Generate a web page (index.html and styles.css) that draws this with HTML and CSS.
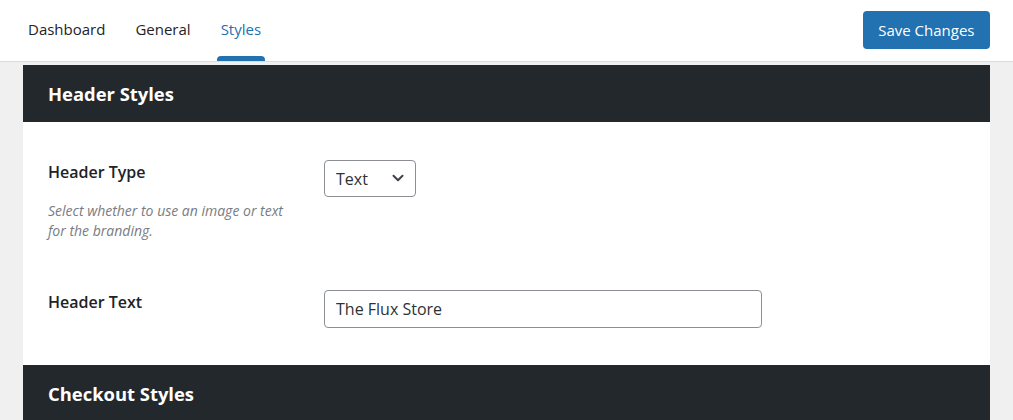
FILE: index.html
```html
<!DOCTYPE html>
<html lang="en">
<head>
    <meta charset="UTF-8">
    <meta name="viewport" content="width=device-width, initial-scale=1.0">
    <title>Styles - Settings</title>
    <link rel="stylesheet" href="styles.css">
</head>
<body>
    <div class="barra-superior">
        <nav class="pestanas">
            <a class="pestana" href="#">Dashboard</a>
            <a class="pestana" href="#">General</a>
            <a class="pestana activa" href="#">Styles</a>
        </nav>
        <button class="btn-guardar">Save Changes</button>
    </div>

    <div class="contenido">
        <div class="panel">
            <h2 class="panel-titulo">Header Styles</h2>
            <div class="panel-cuerpo">
                <div class="fila-opcion">
                    <div class="opcion-etiqueta">
                        <label for="header-type">Header Type</label>
                        <p class="opcion-ayuda">Select whether to use an image or text for the branding.</p>
                    </div>
                    <div class="opcion-campo">
                        <div class="selector">
                            <select id="header-type">
                                <option value="text">Text</option>
                                <option value="image">Image</option>
                            </select>
                            <svg class="selector-flecha" width="14" height="14" viewBox="0 0 14 14">
                                <path d="M2.5 4.8 L7 9.2 L11.5 4.8" fill="none" stroke="#3c434a" stroke-width="2" stroke-linecap="round" stroke-linejoin="round"/>
                            </svg>
                        </div>
                    </div>
                </div>

                <div class="fila-opcion">
                    <div class="opcion-etiqueta">
                        <label for="header-text">Header Text</label>
                    </div>
                    <div class="opcion-campo">
                        <input type="text" id="header-text" class="campo-texto" value="The Flux Store">
                    </div>
                </div>
            </div>
        </div>

        <div class="panel">
            <h2 class="panel-titulo">Checkout Styles</h2>
        </div>
    </div>
</body>
</html>
```

FILE: styles.css
```css
/* Pantalla de ajustes: pestaña Styles */
body {
    background-color: #f0f0f0;
    color: #1d2327;
    font-family: 'Open Sans', 'Noto Sans', sans-serif;
    margin: 0;
    padding: 0;
}

.barra-superior {
    display: flex;
    justify-content: space-between;
    align-items: center;
    height: 62px;
    background-color: #ffffff;
    border-bottom: 1px solid #dcdcde;
    padding: 0 23px 0 24px;
    box-sizing: border-box;
}

.pestanas {
    display: flex;
    gap: 22px;
    height: 100%;
}

.pestana {
    display: flex;
    align-items: center;
    position: relative;
    padding: 0 4px 3px;
    font-size: 15px;
    color: #1d2327;
    text-decoration: none;
}

.pestana.activa {
    color: #2271b1;
}

.pestana.activa::after {
    content: "";
    position: absolute;
    left: 0;
    right: 0;
    bottom: 0;
    height: 5px;
    background-color: #2271b1;
    border-radius: 4px 4px 0 0;
}

.btn-guardar {
    background-color: #2271b1;
    color: #ffffff;
    border: none;
    border-radius: 4px;
    font-family: inherit;
    font-size: 15px;
    padding: 0 15.5px;
    height: 38px;
    margin-top: -1px;
    cursor: pointer;
}

.contenido {
    padding: 3px 23px 0;
}

.panel-titulo {
    margin: 0;
    background-color: #23282d;
    color: #ffffff;
    font-size: 18.4px;
    font-weight: bold;
    height: 57px;
    line-height: 57px;
    padding: 0 25px;
}

.panel-cuerpo {
    background-color: #ffffff;
    padding: 38px 25px 37px;
}

.fila-opcion {
    display: flex;
    margin-bottom: 49px;
}

.fila-opcion:last-child {
    margin-bottom: 0;
}

.opcion-etiqueta {
    width: 276px;
    flex-shrink: 0;
}

.opcion-etiqueta label {
    display: block;
    font-size: 16px;
    font-weight: 600;
    line-height: 24px;
}

.opcion-ayuda {
    margin: 17px 0 0;
    width: 250px;
    font-size: 14px;
    font-style: italic;
    line-height: 20px;
    color: #787c82;
}

.opcion-campo {
    flex: 1;
}

.selector {
    position: relative;
    width: 92px;
}

.selector select {
    appearance: none;
    width: 100%;
    height: 37px;
    padding: 0 11px;
    border: 1px solid #8c8f94;
    border-radius: 4px;
    background-color: #ffffff;
    color: #2c3338;
    font-family: inherit;
    font-size: 16px;
}

.selector-flecha {
    position: absolute;
    right: 11px;
    top: 11px;
    pointer-events: none;
}

.campo-texto {
    width: 438px;
    height: 38px;
    padding: 0 11px;
    border: 1px solid #8c8f94;
    border-radius: 4px;
    box-sizing: border-box;
    color: #2c3338;
    font-family: inherit;
    font-size: 16px;
}
```
